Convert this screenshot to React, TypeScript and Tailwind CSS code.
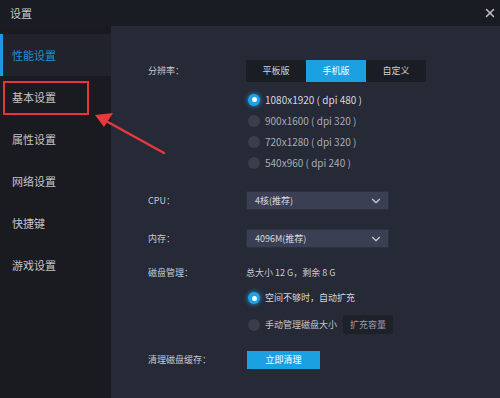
import { ChevronDown, X } from 'lucide-react'

const navItems = ['性能设置', '基本设置', '属性设置', '网络设置', '快捷键', '游戏设置']

const resolutions = [
  '1080x1920 ( dpi 480 )',
  '900x1600 ( dpi 320 )',
  '720x1280 ( dpi 320 )',
  '540x960 ( dpi 240 )',
]

function Radio({ checked }: { checked?: boolean }) {
  if (checked) {
    return (
      <span className="w-[12px] h-[12px] rounded-full bg-[#1ea3e6] flex items-center justify-center shadow-[0_0_5px_#1ea3e6]">
        <span className="w-[5px] h-[5px] rounded-full bg-white" />
      </span>
    )
  }
  return <span className="w-[12px] h-[12px] rounded-full bg-[#3a3d4a]" />
}

function Select({ value }: { value: string }) {
  return (
    <div className="w-[143px] h-[19px] bg-[#3b3f54] border border-[#2c2f3d] flex items-center justify-between pl-[8px] pr-[5px] text-[9px] text-[#d7d9e0]">
      <span>{value}</span>
      <ChevronDown size={14} strokeWidth={2} className="text-[#c9ccd6]" />
    </div>
  )
}

export default function App() {
  return (
    <div
      className="w-[500px] h-[398px] flex flex-col bg-[#262936] relative overflow-hidden"
      style={{ fontFamily: '"Noto Sans CJK SC", "Noto Sans", sans-serif' }}
    >
      <div className="h-[26px] bg-[#1a1c23] flex items-center justify-between pl-[10px] pr-[3px] shrink-0">
        <span className="text-[11px] text-[#c6c8ce]">设置</span>
        <X size={14} strokeWidth={2.5} className="text-[#c0c2c8]" />
      </div>

      <div className="flex flex-1">
        <div className="w-[111px] bg-[#191b21] pt-[8px] shrink-0">
          {navItems.map((item, i) => (
            <div
              key={item}
              className={
                'h-[42px] flex items-center pl-[12px] text-[11px] relative ' +
                (i === 0 ? 'bg-[#20232c] text-[#1c8fd2]' : 'text-[#c3c5cc]')
              }
            >
              {i === 0 && <span className="absolute left-0 top-0 bottom-0 w-[3px] bg-[#1b9ae0]" />}
              {item}
              {i === 1 && (
                <span className="absolute left-[3px] top-[5px] w-[86px] h-[34px] border-2 border-[#e0393c]" />
              )}
            </div>
          ))}
        </div>

        <div className="flex-1 pl-[37px] flex flex-col text-[9px] text-[#c8cad1]">
          <div className="mt-[34px] flex items-center h-[22px]">
            <span className="w-[98px]">分辨率：</span>
            <div className="flex bg-[#1b1d24] h-[22px]">
              <span className="w-[60px] flex items-center justify-center text-[#d0d2d8]">平板版</span>
              <span className="w-[60px] flex items-center justify-center bg-[#1ba1e2] text-white">手机版</span>
              <span className="w-[60px] flex items-center justify-center text-[#d0d2d8]">自定义</span>
            </div>
          </div>

          <div className="mt-[7px] flex flex-col pl-[100px]">
            {resolutions.map((r, i) => (
              <div key={r} className="h-[21px] flex items-center gap-[5px]">
                <Radio checked={i === 0} />
                <span className={'text-[10px] ' + (i === 0 ? 'text-[#d5d7de]' : 'text-[#a9acb6]')}>{r}</span>
              </div>
            ))}
          </div>

          <div className="mt-[18px] flex items-center h-[19px]">
            <span className="w-[98px]">CPU：</span>
            <Select value="4核(推荐)" />
          </div>

          <div className="mt-[19px] flex items-center h-[19px]">
            <span className="w-[98px]">内存：</span>
            <Select value="4096M(推荐)" />
          </div>

          <div className="mt-[17px] flex items-center h-[16px]">
            <span className="w-[98px]">磁盘管理：</span>
            <span>总大小 12 G，剩余 8 G</span>
          </div>

          <div className="mt-[9px] flex items-center h-[16px] pl-[100px] gap-[5px]">
            <Radio checked />
            <span className="text-[#d5d7de]">空间不够时，自动扩充</span>
          </div>

          <div className="mt-[9px] flex items-center h-[19px] pl-[100px] gap-[5px]">
            <Radio />
            <span className="text-[#c3c5cc]">手动管理磁盘大小</span>
            <span className="h-[19px] px-[7px] ml-[1px] bg-[#1f2129] flex items-center text-[#9a9daa]">扩充容量</span>
          </div>

          <div className="mt-[17px] flex items-center h-[18px]">
            <span className="w-[99px]">清理磁盘缓存：</span>
            <span className="w-[73px] h-[18px] bg-[#1ba1e2] text-white flex items-center justify-center">立即清理</span>
          </div>
        </div>
      </div>

      <svg className="absolute left-0 top-0 pointer-events-none" width="500" height="398">
        <line x1="164" y1="153" x2="106" y2="121" stroke="#e8383b" strokeWidth="2.5" strokeLinecap="round" />
        <polygon points="95,115 113,113 104,127" fill="#e8383b" />
      </svg>
    </div>
  )
}
